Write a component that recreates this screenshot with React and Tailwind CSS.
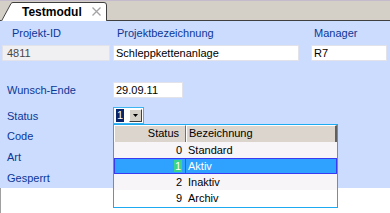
import React from 'react'

function CloseX() {
  return (
    <svg width="9" height="9" viewBox="0 0 9 9" className="ml-[10px]">
      <path d="M0.5 0.5 L8.5 8.5 M8.5 0.5 L0.5 8.5" stroke="#a4a4a4" strokeWidth="1.3" fill="none" />
    </svg>
  )
}

function TabStrip() {
  return (
    <div className="flex items-end h-[21px] bg-[#d4d0c8] border-t border-[#c4bccc] border-b border-b-[#404040]">
      <div className="relative z-10 -mb-px ml-px h-[19px] w-[107px] flex items-center">
        <svg className="absolute inset-0" width="107" height="19" viewBox="0 0 107 19">
          <path d="M0 19 L10 1.5 Q10.8 0.5 12 0.5 L103 0.5 Q105.5 0.5 105.5 3 L105.5 19 Z" fill="#ffffff" />
          <path d="M0.5 19 L10 1.5 Q10.8 0.5 12 0.5 L103 0.5 Q105.5 0.5 105.5 3 L105.5 18.5 L107 18.5" stroke="#404040" fill="none" />
        </svg>
        <span className="relative pl-[21px] text-[12px] font-bold text-black leading-[16px]">Testmodul</span>
        <span className="relative"><CloseX /></span>
      </div>
    </div>
  )
}

function Field({ children, className }) {
  return (
    <div className={`h-[16px] border border-[#e2e2ea] px-[2px] leading-[14px] ${className}`}>{children}</div>
  )
}

const rows = [
  { id: '0', name: 'Standard', bg: 'bg-[#f7f5f8]' },
  { id: '1', name: 'Aktiv', selected: true },
  { id: '2', name: 'Inaktiv', bg: 'bg-[#f7f5f8]' },
  { id: '9', name: 'Archiv', bg: 'bg-white' },
]

function StatusList() {
  return (
    <div className="absolute left-[113px] top-[103px] w-[225px] h-[84px] border border-[#1eaaf0] bg-white text-black">
      <div className="flex h-[17px] leading-[15px] bg-[#dcd5ce]">
        <div className="w-[72px] text-right pr-[6px] border-l border-t border-white border-r border-r-[#707070]">Status</div>
        <div className="flex-1 pl-[2px] border-l border-t border-white border-r-2 border-r-[#606060]">Bezeichnung</div>
      </div>
      {rows.map(r =>
        r.selected ? (
          <div key={r.id} className="flex h-[16px] leading-[14px] bg-[#2fa2ff] border border-[#3a3af0] text-white">
            <div className="w-[71px] text-right pr-[3px] border-r border-[#3a58f0]">
              <span className="bg-[#3cd48c] px-px">{r.id}</span>
            </div>
            <div className="flex-1 pl-[2px]">{r.name}</div>
          </div>
        ) : (
          <div key={r.id} className={`flex h-[16px] leading-[16px] ${r.bg}`}>
            <div className="w-[72px] text-right pr-[4px]">{r.id}</div>
            <div className="flex-1 pl-[2px]">{r.name}</div>
          </div>
        )
      )}
    </div>
  )
}

export default function App() {
  return (
    <div className="w-[390px] h-[213px] bg-white font-['Liberation_Sans',Arial,sans-serif] text-[11px] leading-[16px] overflow-hidden">
      <TabStrip />
      <div className="relative h-[167px] bg-[#cbdcff] text-[#0c3796]">
        <div className="flex pt-[4px] h-[20px]">
          <div className="ml-[12px] w-[101px]">Projekt-ID</div>
          <div className="w-[198px] pl-[4px]">Projektbezeichnung</div>
          <div className="pl-[3px]">Manager</div>
        </div>
        <div className="flex mt-[4px]">
          <Field className="ml-[2px] w-[108px] bg-[#f0f0f2] text-[#474747] pl-[4px]">4811</Field>
          <Field className="ml-[3px] w-[186px] bg-white text-black">Schleppkettenanlage</Field>
          <Field className="ml-[12px] w-[76px] bg-white text-black">R7</Field>
        </div>
        <div className="flex items-center mt-[21px]">
          <div className="w-[113px] pl-[7px]">Wunsch-Ende</div>
          <Field className="w-[70px] bg-white text-black">29.09.11</Field>
        </div>
        <div className="flex items-center mt-[9px] h-[17px]">
          <div className="w-[113px] pl-[7px]">Status</div>
          <div className="flex items-center h-[17px] w-[31px] border border-[#3cb4f0] bg-white">
            <span className="ml-[2px] h-[13px] leading-[13px] px-px bg-[#0a246a] text-white">1</span>
            <span className="ml-auto mr-px h-[13px] w-[13px] flex items-center justify-center bg-[#d4d0c8] border border-white border-r-[#404040] border-b-[#404040]">
              <svg width="5" height="3" viewBox="0 0 5 3"><path d="M0 0 L5 0 L2.5 3 Z" fill="#000" /></svg>
            </span>
          </div>
        </div>
        <div className="pl-[7px] mt-[4px]">Code</div>
        <div className="pl-[7px] mt-[5px]">Art</div>
        <div className="pl-[7px] mt-[5px]">Gesperrt</div>
        <StatusList />
      </div>
      <div className="h-[25px] border-l border-[#a0a0a0]" />
    </div>
  )
}
